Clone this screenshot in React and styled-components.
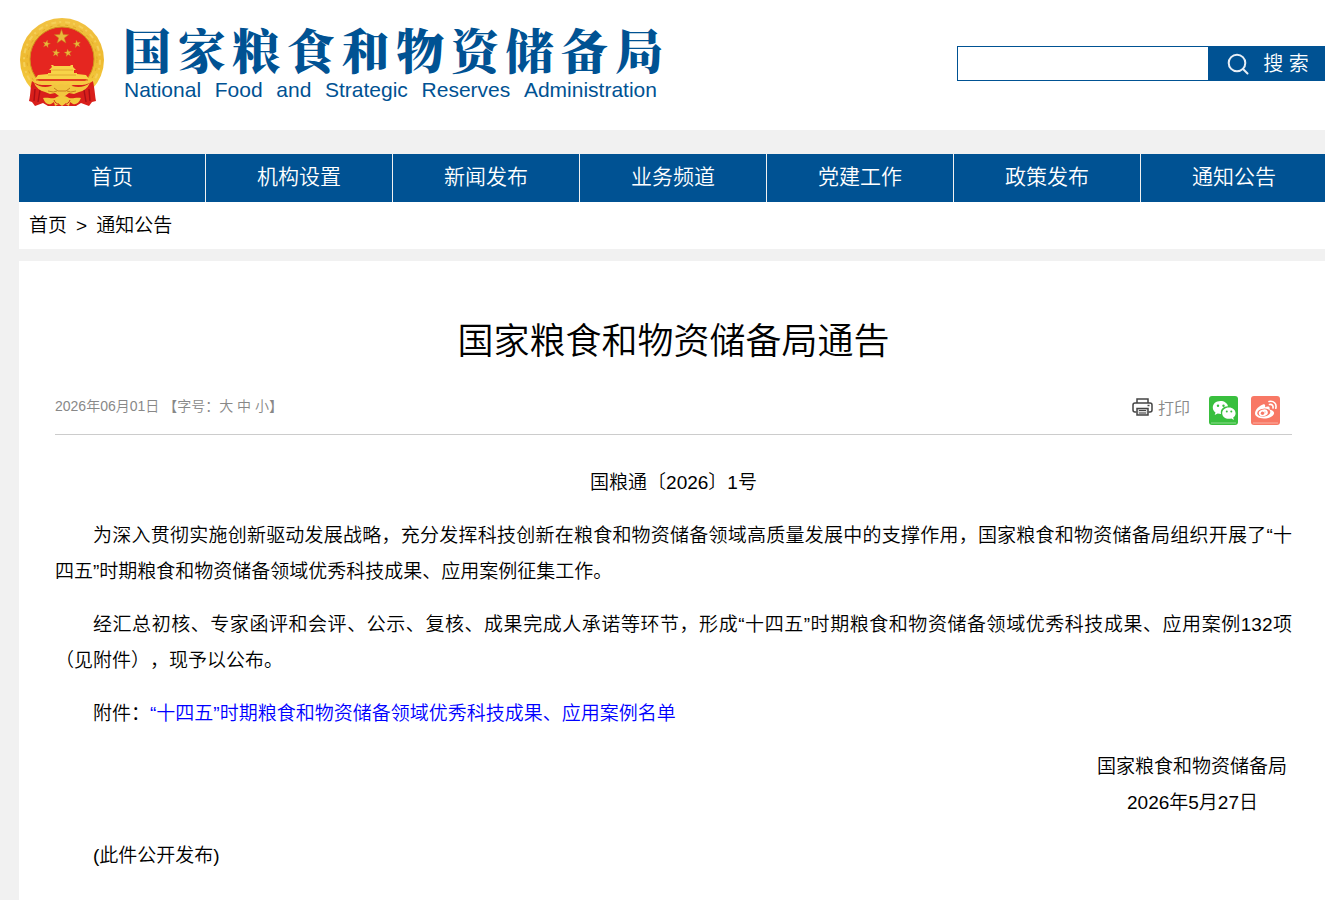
import React from "react";
import styled, { createGlobalStyle } from "styled-components";

const GlobalStyle = createGlobalStyle`
  * {
    box-sizing: border-box;
  }

  body {
    margin: 0;
    background: #f1f1f1;
    color: #000;
    font-family: "Liberation Sans", "Noto Sans CJK SC", sans-serif;
    font-size: 19px;
    font-weight: 350;
    overflow-x: hidden;
    text-spacing-trim: space-all;
  }

  button,
  input {
    font-family: inherit;
    font-weight: inherit;
  }
`;

const Header = styled.header`
  display: flex;
  align-items: flex-start;
  justify-content: space-between;
  height: 130px;
  padding-left: 12px;
  background: #fff;
`;

const Brand = styled.a`
  display: flex;
  color: #005293;
  text-decoration: none;
`;

const Emblem = styled.svg`
  display: block;
  flex: none;
  width: 100px;
  height: 105px;
  margin: 10px 11px 0 0;
`;

const BrandText = styled.div`
  width: 540px;
  padding-top: 22px;
`;

const BrandName = styled.div`
  display: flex;
  justify-content: space-between;
  font-family: "Noto Serif CJK SC", "Noto Sans CJK SC", serif;
  font-size: 48px;
  font-weight: 900;
  line-height: 54px;
`;

const BrandEnglish = styled.div`
  display: flex;
  justify-content: space-between;
  padding: 0 6px 0 1px;
  font-size: 21px;
  line-height: 28px;
`;

const SearchForm = styled.form`
  display: flex;
  height: 35px;
  margin-top: 46px;
`;

const SearchInput = styled.input`
  width: 252px;
  padding: 0 8px;
  border: 1px solid #005293;
  border-radius: 0;
  background: #fff;
  font-size: 16px;
  outline: none;
`;

const SearchButton = styled.button`
  display: flex;
  align-items: center;
  justify-content: center;
  gap: 14px;
  width: 116px;
  padding: 0 0 0 2px;
  border: 0;
  background: #005293;
  color: #fff;
  font-size: 20px;
  line-height: 32px;
`;

const Container = styled.div`
  margin: 24px -2px 0 19px;
`;

const Nav = styled.nav`
  display: flex;
  height: 48px;
  background: #005293;
`;

const NavLink = styled.a`
  flex: 1;
  color: #fff;
  font-size: 21px;
  line-height: 46px;
  text-align: center;
  text-decoration: none;

  & + & {
    border-left: 1px solid #f1f1f1;
  }
`;

const Breadcrumb = styled.nav`
  display: flex;
  gap: 9px;
  height: 47px;
  padding-left: 10px;
  background: #fff;
  line-height: 47px;
`;

const Crumb = styled.a`
  color: #000;
  text-decoration: none;
`;

const Article = styled.main`
  min-height: 660px;
  margin-top: 12px;
  padding: 54px 35px 24px 36px;
  background: #fff;
`;

const Title = styled.h1`
  margin: 0;
  font-size: 36px;
  font-weight: 350;
  line-height: 54px;
  text-align: center;
`;

const Meta = styled.div`
  display: flex;
  align-items: flex-start;
  justify-content: space-between;
  height: 40px;
  margin-top: 26px;
  padding-right: 12px;
  border-bottom: 1px solid #ccc;
  color: #888;
`;

const MetaInfo = styled.div`
  font-size: 14px;
  line-height: 22px;
`;

const SizeButton = styled.button`
  padding: 0;
  border: 0;
  background: none;
  color: inherit;
  font-size: 14px;
`;

const Tools = styled.div`
  display: flex;
  align-items: flex-start;
`;

const PrintButton = styled.button`
  display: flex;
  align-items: center;
  gap: 5px;
  height: 24px;
  margin-right: 19px;
  padding: 0;
  border: 0;
  background: none;
  color: #888;
  font-size: 16px;
`;

const ShareLink = styled.a`
  display: block;
  width: 29px;
  height: 29px;
  margin: 1px 0 0 ${(props) => (props.$spaced ? "13px" : "0")};
  border-radius: 3px;
  background: ${(props) => props.$color};
`;

const Content = styled.div`
  display: flex;
  flex-direction: column;
  gap: 17px;
  padding-top: 30px;
  line-height: 36px;
`;

const Paragraph = styled.p`
  margin: 0;
  text-indent: 2em;
  text-align: justify;
`;

const DocNumber = styled.p`
  margin: 0;
  text-align: center;
`;

const Signature = styled.div`
  display: flex;
  flex-direction: column;
  align-items: flex-end;
  padding-right: 5px;
`;

const SignatureDate = styled.time`
  padding-right: 29px;
`;

const AttachmentLink = styled.a`
  color: #0000ff;
  text-decoration: none;
`;

const STAR = "0,-10 2.4,-3.2 9.5,-3.1 3.8,1.2 5.9,8.1 0,4 -5.9,8.1 -3.8,1.2 -9.5,-3.1 -2.4,-3.2";

const menu = ["首页", "机构设置", "新闻发布", "业务频道", "党建工作", "政策发布", "通知公告"];
const englishName = "National Food and Strategic Reserves Administration";

const NationalEmblem = () => (
  <Emblem viewBox="0 0 100 105" aria-hidden="true">
    <defs>
      <linearGradient id="gold" x1="0" y1="0" x2="0" y2="1">
        <stop offset="0" stopColor="#f1c243" />
        <stop offset="0.5" stopColor="#eeba30" />
        <stop offset="1" stopColor="#f8d548" />
      </linearGradient>
    </defs>
    <circle cx="50" cy="50" r="42" fill="url(#gold)" />
    <circle cx="50" cy="50" r="38" fill="none" stroke="#f5cf58" strokeWidth="2" strokeDasharray="5 3 2 4" />
    <circle cx="50" cy="50" r="35" fill="none" stroke="#e2a92a" strokeWidth="1" strokeDasharray="3 5" />
    <circle cx="50" cy="49" r="32" fill="#e52620" stroke="#cf921d" />
    <g fill="#e9b93b" stroke="#c77b1d" strokeWidth="0.7">
      <polygon points={STAR} transform="translate(49.5 27) scale(.75)" />
      <polygon points={STAR} transform="translate(34.5 34) rotate(12) scale(.4)" />
      <polygon points={STAR} transform="translate(65 34) rotate(-12) scale(.4)" />
      <polygon points={STAR} transform="translate(44 43) rotate(8) scale(.4)" />
      <polygon points={STAR} transform="translate(56 43) rotate(-8) scale(.4)" />
    </g>
    <path d="M39 55h2l1 1h16l1-1h2v2l3 3h-2v3h3v1l9 1 3 4H23l3-4 10-1v-1h3v-3h-2l3-3z" fill="#f8d348" />
    <path d="M39 60h22M36 65h28" fill="none" stroke="#dba12c" strokeWidth="0.8" />
    <path d="M22 71h56l-4 7H26z" fill="#f6c942" />
    <path d="M24 70h52" stroke="#df5a1f" strokeWidth="1" />
    <path d="M20 71c6 5 12 4 19 4l11 6 11-6c7 0 13 1 20-4 2 10 2 15 3 20l-4 1-3 4-8-3-5 3H36l-5-3-8 3-3-4-3-1c2-8 1-13 3-20z" fill="#d91f1b" />
    <path d="M23 79l-1 12m6-11l-2 12M77 79l1 12m-6-11l2 12" fill="none" stroke="#a90f16" strokeWidth="1.4" />
    <path d="M22 73q8 6 17 3l4-2c2 2 4 0 6 0s4 2 7 0l4 2q10 3 18-3-4 8-11 9l-5 2-5-1-4 3h-6l-4-3-5 1-5-2q-8-2-11-9z" fill="#f2c63f" />
    <path d="M42 78l4 3h8l4-3m-22 3q6 2 9 0m19 0q-6 2-9 0" fill="none" stroke="#c97d1d" strokeWidth="1" />
    <path d="M31 88c5-1 8 1 12 0 4-3 10-3 14 0 4 1 7-1 12 0-2 5-5 7-8 6l-3-2-1 4-4-2-3 2-3-2-4 2-1-4-3 2c-4 1-6-1-8-6z" fill="#f3c93e" />
    <path d="M42 90c1 3 3 4 5 4m11-4c-1 3-3 4-5 4" fill="none" stroke="#d42e1e" strokeWidth="1" />
  </Emblem>
);

const SearchIcon = () => (
  <svg width="22" height="22" viewBox="0 0 22 22" fill="none" stroke="#e8eff6" strokeWidth="2" aria-hidden="true">
    <circle cx="10" cy="10" r="8.3" />
    <path d="M16 16l4.5 4.5" strokeLinecap="round" />
  </svg>
);

const PrinterIcon = () => (
  <svg width="21" height="19" viewBox="0 0 21 19" fill="none" stroke="#444" strokeWidth="1.5" aria-hidden="true">
    <path d="M5 5V1h11v4" />
    <path d="M4.500 14H3a2 2 0 0 1-2-2V7a2 2 0 0 1 2-2h15a2 2 0 0 1 2 2v5a2 2 0 0 1-2 2h-1.500" />
    <path d="M5 10.500h11V17H5z" fill="#ddd" />
    <path d="M7 12.500h7M7 15h7" strokeWidth="1" />
    <path d="M15.500 7.500h2" />
  </svg>
);

const WechatIcon = () => (
  <svg width="29" height="29" viewBox="0 0 29 29" aria-hidden="true">
    <path d="M11.500 5C7 5 3.800 7.800 3.800 11.500c0 2 1 3.800 2.700 5L5.700 19l3-1.500c1.100.3 2 .4 3.300.4-1-4.500 2.300-7.700 7-7.700C18.300 7 15.300 5 11.500 5z" fill="#fff" />
    <path d="M20 11.500c-4 0-6.800 2.600-6.800 5.700 0 3.200 2.900 5.600 6.700 5.600.9 0 1.700-.1 2.500-.4l2.500 1.500-.7-2.300c1.500-1 2.400-2.600 2.400-4.300 0-3.200-2.800-5.800-6.600-5.800z" fill="#fff" />
    <g fill="#39bf3e">
      <circle cx="9" cy="9.700" r="1.200" />
      <circle cx="14.500" cy="9.700" r="1.200" />
      <circle cx="17.800" cy="15.500" r="1" />
      <circle cx="22.300" cy="15.500" r="1" />
    </g>
    <path d="M2 27h25" stroke="#8edb90" strokeWidth="1" />
  </svg>
);

const WeiboIcon = () => (
  <svg width="29" height="29" viewBox="0 0 29 29" aria-hidden="true">
    <path d="M12 8.500c1.700-.5 2.700.5 2 2.700 2.500-1 5-1 4.600 1.400-.1.600-.1 1 .5 1.200 2.400.6 4 1.700 4 3.200 0 2.900-5 5.500-10.300 5.500-4.800 0-8.800-2-8.800-5.200 0-3.700 4.800-8 8-8.800z" fill="#fff" />
    <ellipse cx="12.800" cy="16.600" rx="6.600" ry="4" transform="rotate(-7 12.800 16.600)" fill="#f87865" />
    <ellipse cx="12.300" cy="16.800" rx="4.600" ry="3.300" transform="rotate(-18 12.300 16.800)" fill="#fff" />
    <circle cx="11.500" cy="17.300" r="1.700" fill="#f87865" />
    <circle cx="14" cy="16" r=".6" fill="#f87865" />
    <path d="M18.500 8.500c2.300-.5 4 1.100 3.500 3.500M18 5.500c4.500-1 8 2 6.800 6.700" fill="none" stroke="#fff" strokeWidth="1.600" strokeLinecap="round" />
    <path d="M2 27h25" stroke="#fbb0a4" strokeWidth="1" />
  </svg>
);

const App = () => {
  return (
    <>
      <GlobalStyle />

      <Header>
        <Brand href="#" aria-label="国家粮食和物资储备局">
          <NationalEmblem />
          <BrandText>
            <BrandName>
              {[..."国家粮食和物资储备局"].map((char, i) => (
                <span key={i}>{char}</span>
              ))}
            </BrandName>
            <BrandEnglish>
              {englishName.split(" ").map((word) => (
                <span key={word}>{word}</span>
              ))}
            </BrandEnglish>
          </BrandText>
        </Brand>
        <SearchForm role="search" onSubmit={(e) => e.preventDefault()}>
          <SearchInput type="text" aria-label="搜索" />
          <SearchButton type="submit">
            <SearchIcon />
            <span>搜 索</span>
          </SearchButton>
        </SearchForm>
      </Header>

      <Container>
        <Nav>
          {menu.map((item) => (
            <NavLink href="#" key={item}>{item}</NavLink>
          ))}
        </Nav>
        <Breadcrumb>
          <Crumb href="#">首页</Crumb>
          <span>&gt;</span>
          <Crumb href="#">通知公告</Crumb>
        </Breadcrumb>

        <Article>
          <Title>国家粮食和物资储备局通告</Title>
          <Meta>
            <MetaInfo>
              2026年06月01日 【字号：<SizeButton type="button">大</SizeButton>{" "}
              <SizeButton type="button">中</SizeButton>{" "}
              <SizeButton type="button">小</SizeButton>】
            </MetaInfo>
            <Tools>
              <PrintButton type="button">
                <PrinterIcon />
                <span>打印</span>
              </PrintButton>
              <ShareLink href="#" aria-label="微信" $color="#39bf3e">
                <WechatIcon />
              </ShareLink>
              <ShareLink href="#" aria-label="微博" $color="#f87865" $spaced>
                <WeiboIcon />
              </ShareLink>
            </Tools>
          </Meta>

          <Content>
            <DocNumber>国粮通〔2026〕1号</DocNumber>
            <Paragraph>
              为深入贯彻实施创新驱动发展战略，充分发挥科技创新在粮食和物资储备领域高质量发展中的支撑作用，国家粮食和物资储备局组织开展了“十四五”时期粮食和物资储备领域优秀科技成果、应用案例征集工作。
            </Paragraph>
            <Paragraph>
              经汇总初核、专家函评和会评、公示、复核、成果完成人承诺等环节，形成“十四五”时期粮食和物资储备领域优秀科技成果、应用案例132项（见附件），现予以公布。
            </Paragraph>
            <Paragraph>
              附件：
              <AttachmentLink href="#">“十四五”时期粮食和物资储备领域优秀科技成果、应用案例名单</AttachmentLink>
            </Paragraph>
            <Signature>
              <span>国家粮食和物资储备局</span>
              <SignatureDate dateTime="2026-05-27">2026年5月27日</SignatureDate>
            </Signature>
            <Paragraph>(此件公开发布)</Paragraph>
          </Content>
        </Article>
      </Container>
    </>
  );
};

export default App;
